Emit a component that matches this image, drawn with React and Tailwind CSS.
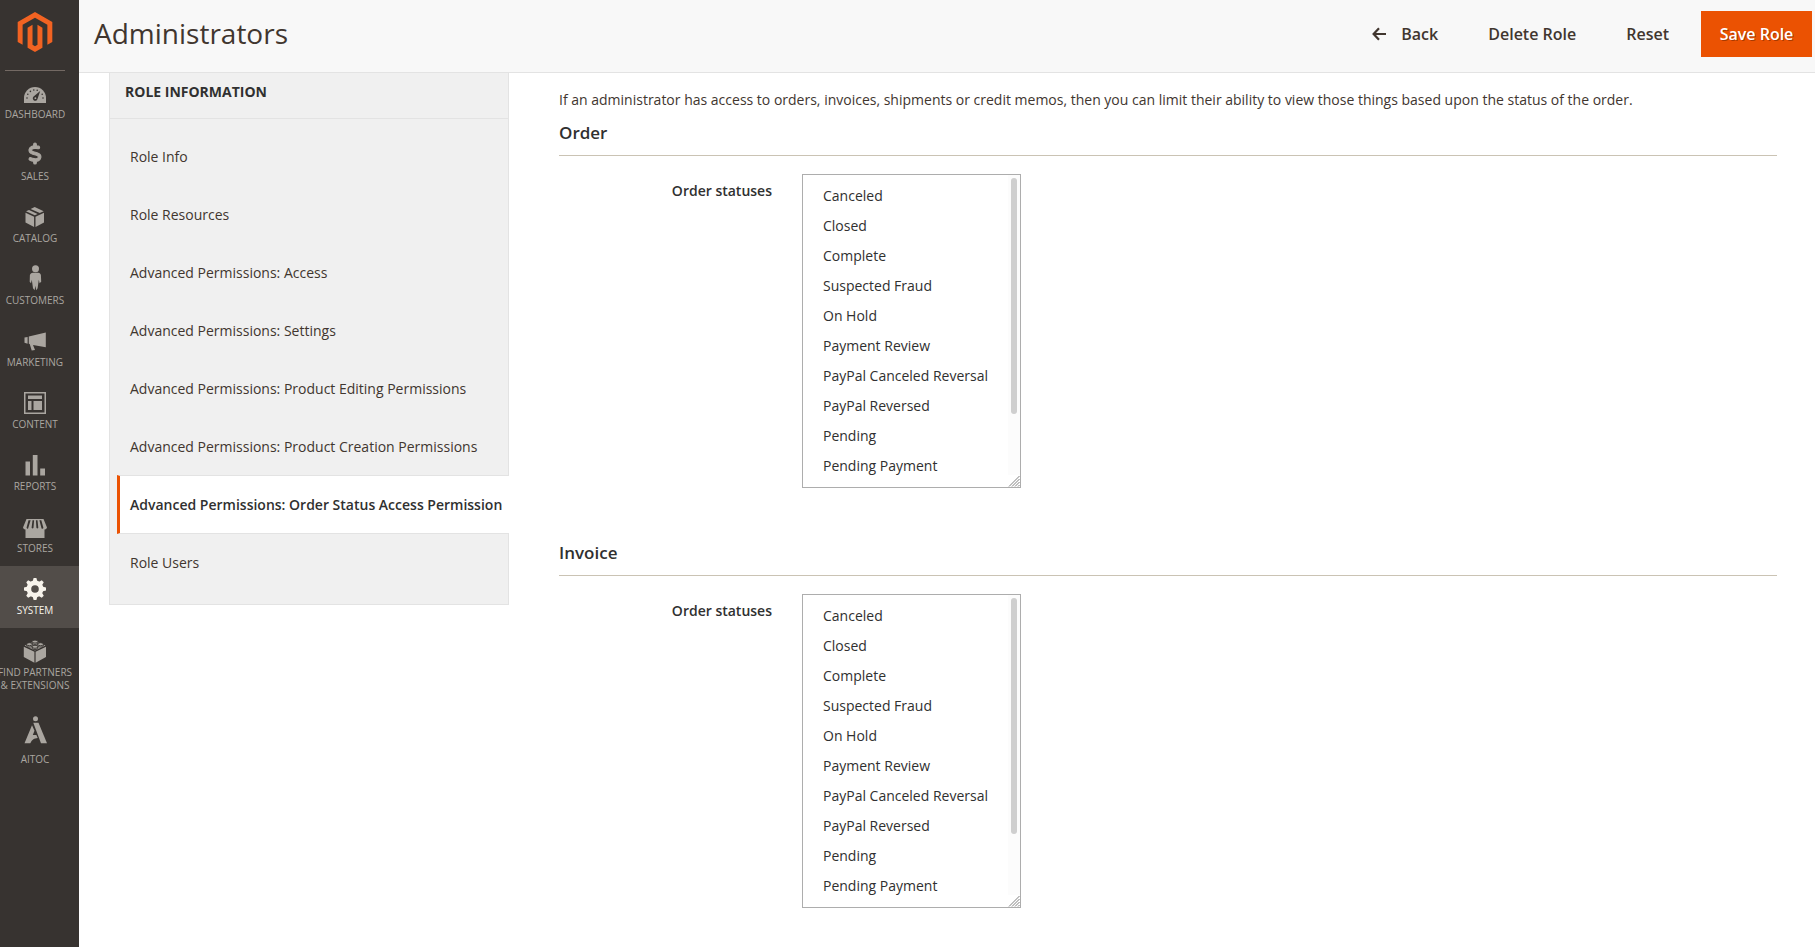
import React from "react";
import { FaDollarSign } from "react-icons/fa6";

const Glyph = ({ children }) => (
  <svg viewBox="0 0 24 24" className="h-6 w-6 overflow-visible" fill="currentColor" aria-hidden="true">
    {children}
  </svg>
);

const icons = {
  dashboard: (
    <Glyph>
      <path d="M1 22v-5a11 11 0 0 1 22 0v5z" />
      <g fill="#373330">
        <circle cx="4" cy="17" r="0.8" />
        <circle cx="4.800" cy="13.300" r="0.8" />
        <circle cx="7.400" cy="10.400" r="0.8" />
        <circle cx="10.800" cy="9" r="0.8" />
        <circle cx="14.200" cy="9.200" r="0.8" />
        <circle cx="19.200" cy="13.300" r="0.8" />
        <circle cx="20" cy="17" r="0.8" />
        <path d="M17.200 10l-2.700 8a2.400 2.400 0 1 1-3.900-2.400z" />
      </g>
      <circle cx="12.400" cy="17.200" r="0.9" />
    </Glyph>
  ),
  sales: <FaDollarSign className="h-[21px] w-6 overflow-visible" stroke="currentColor" strokeWidth="28" aria-hidden="true" />,
  catalog: (
    <Glyph>
      <path d="M2.500 7.700l8.600 4V22L2.500 17.600zM21 7.700l-8.500 4V22L21 17.600z" />
      <path d="M3 6.300L6 4.900l8.600 4-2.800 1.300zM7.600 4.100l4.100-2 9 4.200-3.900 1.800z" />
    </Glyph>
  ),
  customers: (
    <Glyph>
      <circle cx="12.500" cy="1.700" r="3.500" />
      <path d="M10 5.700h5.200c1.500 0 2.500 1 2.700 2.400l.3 6.600-1.600 1.500-.8-3.500-1.200 8.500-1.400 2-.8-4.500-.8 4.500-1.600-2-1.200-8.500-.8 3.500-1.300-1.500.2-6.600C7.200 6.700 8.300 5.700 10 5.700z" />
    </Glyph>
  ),
  marketing: (
    <Glyph>
      <path d="M1.500 8.500L4.600 8v6.800L1.500 13.800zM5.800 7.600L22.800 3.500v14.800L10 16l2 5-3.300.4-2-6.400-.9-.3z" />
    </Glyph>
  ),
  content: (
    <Glyph>
      <path fillRule="evenodd" d="M1 1h22v22H1zM2.500 2.500v19h19v-19z" />
      <path d="M5 4.500h14v3.500H5zM5 10h3.500v9H5zM10.500 10H19v9h-8.500z" />
    </Glyph>
  ),
  reports: (
    <Glyph>
      <path d="M2.500 8.500H7V22.500H2.500zM9.800 2h4.700v20.500H9.800zM17.200 15.500H22v7h-4.800z" />
    </Glyph>
  ),
  stores: (
    <Glyph>
      <path d="M2.500 13h19v10h-19z" />
      <path d="M3.500 4h17L24 12.500a2.500 2.500 0 0 1-4.500 1h-15a2.500 2.500 0 0 1-4.500-1z" />
      <path
        d="M5.500 5.200L3.600 12.500a1 1 0 0 0 1.500 1L7.600 5.200zM9.500 5.200l-.9 7.600a1.200 1.200 0 0 0 1.900 0l.6-7.600zM12.900 5.200l.5 7.600a1.200 1.200 0 0 0 1.900 0l-.8-7.600zM16.400 5.200l2.200 8.200a1 1 0 0 0 1.700-1l-2-7.200z"
        fill="#373330"
      />
    </Glyph>
  ),
  system: (
    <Glyph>
      <g>
        {[0, 45, 90, 135, 180, 225, 270, 315].map((a) => (
          <path key={a} d="M9.500 5L10.600 1h2.800l1.100 4z" transform={`rotate(${a} 12 12)`} />
        ))}
        <path fillRule="evenodd" d="M12 3.600a8.400 8.400 0 1 0 0 16.800 8.400 8.400 0 0 0 0-16.800zM12 8.200a3.800 3.800 0 1 1 0 7.600 3.800 3.800 0 0 1 0-7.600z" />
      </g>
    </Glyph>
  ),
  partners: (
    <Glyph>
      <path d="M.8 7.800L11.400 12.800V23.700L.8 18zM23 7.800L12.600 12.800V23.700L23 18z" />
      <path d="M1.600 6.500L12 2l10.400 4.500L12 11.600z" />
      <g stroke="#373330" strokeWidth="0.9">
        <path d="M9.100 2.600v1.300c0 2 5.800 2 5.800 0V2.600zM3.500 5.200v1.300c0 2 5.800 2 5.800 0V5.200zM14.700 5.200v1.300c0 2 5.800 2 5.800 0V5.200zM9.100 7.800v1.300c0 2 5.800 2 5.800 0V7.800z" />
        <ellipse cx="12" cy="2.600" rx="2.900" ry="1.500" />
        <ellipse cx="6.400" cy="5.200" rx="2.900" ry="1.500" />
        <ellipse cx="17.600" cy="5.200" rx="2.900" ry="1.500" />
        <ellipse cx="12" cy="7.800" rx="2.900" ry="1.500" />
      </g>
    </Glyph>
  ),
  aitoc: (
    <svg viewBox="0 0 24 28" className="h-7 w-6" fill="currentColor" aria-hidden="true">
      <circle cx="12.500" cy="2.800" r="2.500" />
      <path d="M10.300 6.800h5.200L24 27.300h-6z" />
      <path d="M9 9.200l2.500 5.600-1.700 4.200 3.600-.1 1.300 3.200c-3.500.2-5.500 1.500-7.400 5.200H1.500z" />
    </svg>
  ),
};

const menu = [
  ["dashboard", "Dashboard"],
  ["sales", "Sales"],
  ["catalog", "Catalog"],
  ["customers", "Customers"],
  ["marketing", "Marketing"],
  ["content", "Content"],
  ["reports", "Reports"],
  ["stores", "Stores"],
  ["system", "System"],
  ["partners", "Find\u00a0Partners &\u00a0Extensions"],
  ["aitoc", "Aitoc"],
];

const tabs = [
  "Role Info",
  "Role Resources",
  "Advanced Permissions: Access",
  "Advanced Permissions: Settings",
  "Advanced Permissions: Product Editing Permissions",
  "Advanced Permissions: Product Creation Permissions",
  "Advanced Permissions: Order Status Access Permission",
  "Role Users",
];

const statuses = [
  "Canceled",
  "Closed",
  "Complete",
  "Suspected Fraud",
  "On Hold",
  "Payment Review",
  "PayPal Canceled Reversal",
  "PayPal Reversed",
  "Pending",
  "Pending Payment",
  "Pending PayPal",
  "Processing",
];

function Sidebar() {
  return (
    <nav className="w-[79px] shrink-0 overflow-hidden bg-[#373330]">
      <div className="-ml-[9px] w-[88px]">
        <a href="#home" aria-label="Magento" className="mx-[14px] flex h-[71px] justify-center border-b border-[#736963] pt-3">
          <svg viewBox="0 0 24 24" className="h-10 w-10" fill="#f26322" aria-hidden="true">
            <path d="M12 24l-4.455-2.572v-12l2.970-1.715v12.001l1.485.902 1.485-.902V7.713l2.971 1.715v12L12 24zM22.391 6v12l-2.969 1.714V7.713L12 3.430 4.574 7.713v12.001L1.609 18V6L12 0l10.391 6z" />
          </svg>
        </a>
        <ul className="-mt-px">
          {menu.map(([id, label]) => (
            <li key={id}>
              <a
                href={"#" + id}
                className={
                  "flex min-h-[62px] flex-col items-center text-center text-[10px] leading-[13px] uppercase " +
                  (id === "aitoc" ? "pt-[13px] " : "pt-[11px] ") +
                  (id === "system" ? "bg-[#524d49] text-[#f7f3eb]" : "text-[#aaa6a0]")
                }
              >
                <span className={id === "aitoc" ? "flex h-[37px]" : "flex h-[27px]"}>{icons[id]}</span>
                <span className={id === "partners" ? "pb-[11px]" : ""}>{label}</span>
              </a>
            </li>
          ))}
        </ul>
      </div>
    </nav>
  );
}

function Header() {
  return (
    <header className="flex h-[73px] items-start justify-between border-b border-[#e3e3e3] bg-[#f8f8f8] pt-[11px] pr-[3px] pl-[15px] text-[#41362f]">
      <h1 className="text-[28px] leading-[44px]">Administrators</h1>
      <div className="flex h-[46px] text-base font-semibold">
        <button type="button" className="flex items-center gap-[15px] px-[25px]">
          <svg viewBox="0 0 14 14" className="h-[14px] w-[14px]" fill="none" stroke="currentColor" strokeWidth="2.200" aria-hidden="true">
            <path d="M14 7H1.800M7 1.200L1.600 7 7 12.800" />
          </svg>
          Back
        </button>
        <button type="button" className="px-[25px]">Delete Role</button>
        <button type="button" className="pr-8 pl-[25px]">Reset</button>
        <button type="button" className="w-[111px] bg-[#eb5202] text-white text-shadow-[1px_1px_0_rgba(0,0,0,0.3)]">Save Role</button>
      </div>
    </header>
  );
}

function RoleTabs() {
  return (
    <aside className="w-[400px] shrink-0 self-start border-x border-b border-[#e3e3e3] bg-[#f0f0f0] pb-3 text-sm text-[#41362f]">
      <h2 className="border-b border-[#e3e3e3] pb-[7px] pl-[15px] leading-[38px] font-bold text-[#303030] uppercase">Role Information</h2>
      <ul className="mt-[9px]">
        {tabs.map((t) =>
          t.includes("Order Status") ? (
            <li key={t} className="relative -mt-px -mr-px ml-[7px] h-[59px]">
              <a href="#order-status" className="flex h-full items-center border-y border-l-3 border-y-[#e3e3e3] border-l-[#eb5202] bg-white pl-[10px] font-semibold whitespace-nowrap text-[#303030]">
                {t}
              </a>
            </li>
          ) : (
            <li key={t} className="h-[58px]">
              <a href="#tab" className="flex h-full items-center pl-5">{t}</a>
            </li>
          )
        )}
      </ul>
    </aside>
  );
}

function StatusSection({ id, title }) {
  return (
    <section className="mb-[53px] text-[#303030]">
      <h2 className="border-b border-[#cac3b4] pb-[10px] text-[17px] leading-6 font-semibold">{title}</h2>
      <div className="mt-[18px] flex gap-[30px]">
        <label htmlFor={id} className="w-[213px] pt-[7px] text-right text-sm font-semibold">Order statuses</label>
        <div className="relative h-[314px] w-[219px]">
          <select
            id={id}
            multiple
            size={10}
            className="h-full w-full overflow-y-auto border border-[#adadad] bg-white py-[11px] pl-[10px] text-sm text-[#303030] outline-none [scrollbar-width:none]"
          >
            {statuses.map((s) => (
              <option key={s} className="h-[30px] px-[10px] py-0 leading-[30px]">{s}</option>
            ))}
          </select>
          <div className="pointer-events-none absolute top-px right-px bottom-px flex w-3 flex-col bg-[#fcfcfc] pt-[3px]" aria-hidden="true">
            <div className="mx-[3px] h-[236px] rounded-full bg-[#cfcfcf]" />
            <svg viewBox="0 0 12 12" className="mt-auto h-3 w-3 bg-white" fill="none" stroke="#808080" strokeWidth="1">
              <path d="M1 11.500L11.500 1M4 11.500L11.500 4M7 11.500L11.500 7M10 11.500L11.500 10" />
            </svg>
          </div>
        </div>
      </div>
    </section>
  );
}

export default function App() {
  return (
    <div className="flex min-h-screen bg-white font-['Open_Sans','Noto_Sans',sans-serif]">
      <Sidebar />
      <div className="min-w-0 flex-1">
        <Header />
        <div className="flex gap-[50px] pr-[38px] pl-[30px]">
          <RoleTabs />
          <main className="min-w-0 flex-1 pt-[17px]">
            <p className="mb-[11px] text-sm text-[#41362f]">
              If an administrator has access to orders, invoices, shipments or credit memos, then you can limit their ability to view those things based upon the status of the order.
            </p>
            <StatusSection id="order-statuses" title="Order" />
            <StatusSection id="invoice-statuses" title="Invoice" />
          </main>
        </div>
      </div>
    </div>
  );
}
